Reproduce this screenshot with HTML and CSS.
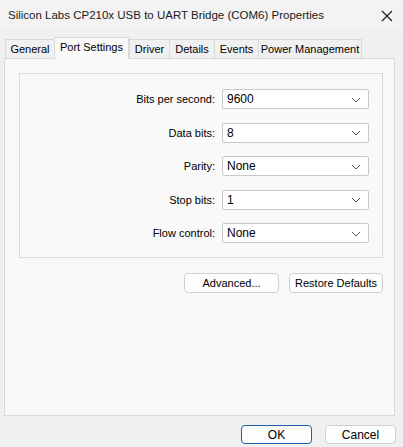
FILE: index.html
```html
<!DOCTYPE html>
<html>
<head>
<meta charset="utf-8">
<link rel="stylesheet" href="styles.css">
</head>
<body>
<div class="window">
  <div class="titlebar">
    <span class="title">Silicon Labs CP210x USB to UART Bridge (COM6) Properties</span>
    <svg class="close" width="12" height="12" viewBox="0 0 12 12"><path d="M1 1L11 11M11 1L1 11" stroke="#1a1a1a" stroke-width="1.1" fill="none"/></svg>
  </div>
  <div class="tabs">
    <div class="tab t-general">General</div>
    <div class="tab active t-port">Port Settings</div>
    <div class="tab t-driver">Driver</div>
    <div class="tab t-details">Details</div>
    <div class="tab t-events">Events</div>
    <div class="tab t-power">Power Management</div>
  </div>
  <div class="panel">
    <div class="group">
      <div class="row"><span class="label">Bits per second:</span><div class="select"><span>9600</span><svg class="chev" width="10" height="6" viewBox="0 0 10 6"><path d="M1 1L5 5L9 1" stroke="#555" stroke-width="1" fill="none"/></svg></div></div>
      <div class="row"><span class="label">Data bits:</span><div class="select"><span>8</span><svg class="chev" width="10" height="6" viewBox="0 0 10 6"><path d="M1 1L5 5L9 1" stroke="#555" stroke-width="1" fill="none"/></svg></div></div>
      <div class="row"><span class="label">Parity:</span><div class="select"><span>None</span><svg class="chev" width="10" height="6" viewBox="0 0 10 6"><path d="M1 1L5 5L9 1" stroke="#555" stroke-width="1" fill="none"/></svg></div></div>
      <div class="row"><span class="label">Stop bits:</span><div class="select"><span>1</span><svg class="chev" width="10" height="6" viewBox="0 0 10 6"><path d="M1 1L5 5L9 1" stroke="#555" stroke-width="1" fill="none"/></svg></div></div>
      <div class="row"><span class="label">Flow control:</span><div class="select"><span>None</span><svg class="chev" width="10" height="6" viewBox="0 0 10 6"><path d="M1 1L5 5L9 1" stroke="#555" stroke-width="1" fill="none"/></svg></div></div>
    </div>
    <div class="actions">
      <button class="btn adv">Advanced...</button>
      <button class="btn restore">Restore Defaults</button>
    </div>
  </div>
  <div class="footer">
    <button class="btn ok">OK</button>
    <button class="btn cancel">Cancel</button>
  </div>
</div>
</body>
</html>
```
FILE: styles.css
```css
* { box-sizing: border-box; }
html, body { margin: 0; padding: 0; }
body {
  background: #f0f0f0;
  font-family: "Liberation Sans", Arial, sans-serif;
  font-size: 11px;
  color: #000;
  width: 403px;
  height: 447px;
  overflow: hidden;
}
.window { display: flex; flex-direction: column; height: 447px; }
.titlebar {
  height: 30px;
  display: flex;
  align-items: center;
  justify-content: space-between;
  padding: 0 10px 0 8px;
  background: #f3f3f3;
}
.title { font-size: 11.5px; color: #1a1a1a; }
.close { margin-top: 1px; }
.tabs {
  display: flex;
  align-items: flex-end;
  padding-left: 5px;
  height: 28px;
  position: relative;
  z-index: 1;
}
.tab {
  height: 19px;
  border: 1px solid #d9d9d9;
  border-bottom: none;
  border-right: none;
  background: #f0f0f0;
  display: flex;
  align-items: center;
  justify-content: center;
}
.tab.t-power { border-right: 1px solid #d9d9d9; }
.tab.active {
  height: 22px;
  background: #f9f9f9;
  border: 1px solid #d9d9d9;
  border-bottom: none;
  margin-bottom: -1px;
  padding-bottom: 3px;
}
.t-general { width: 49px; }
.t-port { width: 75px; }
.t-driver { width: 40px; }
.t-details { width: 45px; }
.t-events { width: 44px; }
.t-power { width: 104px; }
.panel {
  margin: 0 8px 0 4px;
  height: 358px;
  background: #f9f9f9;
  border: 1px solid #d9d9d9;
  padding: 14px 11px 0 14px;
}
.group {
  border: 1px solid #dadada;
  height: 185px;
  padding: 15px 13px 0 0;
  display: flex;
  flex-direction: column;
  gap: 13.5px;
}
.row { display: flex; align-items: center; justify-content: flex-end; gap: 7px; }
.label { text-align: right; }
.select {
  width: 147px;
  height: 20px;
  background: #fff;
  border: 1px solid #c8c8c8;
  border-radius: 2px;
  display: flex;
  align-items: center;
  justify-content: space-between;
  padding: 0 7px 0 4px;
  font-size: 12px;
}
.chev { margin-top: 1px; }
.actions {
  display: flex;
  justify-content: flex-end;
  gap: 10px;
  margin-top: 15px;
}
.btn {
  font-family: "Liberation Sans", Arial, sans-serif;
  font-size: 11px;
  color: #000;
  background: #fdfdfd;
  border: 1px solid #d0d0d0;
  border-radius: 4px;
  height: 20px;
  padding: 0;
}
.adv { width: 95px; }
.restore { width: 94px; }
.footer {
  display: flex;
  justify-content: flex-end;
  gap: 13px;
  padding: 9px 7px 0 0;
}
.ok, .cancel { width: 71px; height: 19px; font-size: 12px; }
.ok { border: 1px solid #1b5fa8; box-shadow: inset 0 0 0 1px #fdfdfd; }
```
